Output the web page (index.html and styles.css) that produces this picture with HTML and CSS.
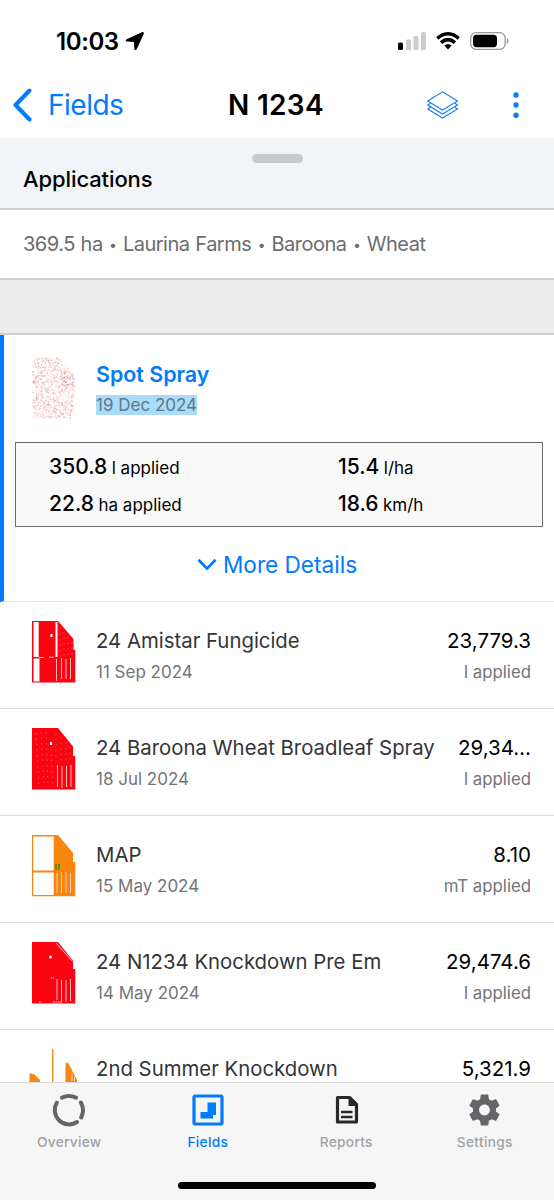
FILE: index.html
```html
<!DOCTYPE html>
<html lang="en">
<head>
<meta charset="utf-8">
<title>N 1234</title>
<link rel="stylesheet" href="styles.css">
</head>
<body>
<div class="screen">
  <header class="top">
    <div class="status">
      <span class="time">10:03</span>
      <svg class="loc" width="20" height="20" viewBox="0 0 20 20"><path d="M16.900 1.200 1.600 8.200c-1.400.7-1.100 2.200.3 2.400l7 .3.4 6.800c.1 1.500 1.800 1.700 2.500.3L18.700 3.100c.6-1.400-.5-2.500-1.800-1.900z"/></svg>
      <span class="grow"></span>
      <svg class="signal" width="28" height="18" viewBox="0 0 28 18"><rect x="0" y="10.500" width="5" height="7.500" rx="1.600"/><g fill="#ccc"><rect x="8" y="7.500" width="5" height="10.500" rx="1.500"/><rect x="15.500" y="4" width="5" height="14" rx="1.500"/><rect x="23" y="0" width="5" height="18" rx="1.500"/></g></svg>
      <svg class="wifi" width="24" height="18" viewBox="0 0 24 18"><g fill="none" stroke="#000" stroke-width="3.500"><path d="M1.300 6.300Q12-2.700 22.700 6.300"/><path d="M5 10.600Q12 4.600 19 10.600"/></g><path d="M8.300 13.600Q12 10.500 15.700 13.600L12 17.500z"/></svg>
      <svg class="battery" width="39" height="18" viewBox="0 0 39 18"><rect x=".7" y=".7" width="34.500" height="16.600" rx="5.500" fill="none" stroke="#999" stroke-width="1.300"/><rect x="3" y="2.800" width="24" height="12.400" rx="3.600"/><path d="M36.800 6c2.200.8 2.200 5.200 0 6z" fill="#999"/></svg>
    </div>
    <nav class="nav">
      <svg width="20" height="34" viewBox="0 0 20 34"><path d="M17.500 2.500 3.500 17 17.500 31.500" fill="none" stroke="#007aff" stroke-width="4" stroke-linecap="round" stroke-linejoin="round"/></svg>
      <a class="back">Fields</a>
      <h1>N 1234</h1>
      <svg class="layers" width="32" height="28" viewBox="0 0 32 28"><g fill="none" stroke="#1880ee" stroke-width="1.100"><path d="M15.500.8 30.500 10 15.500 19 .800 10z"/><path d="M3.300 12.300.8 14l14.700 9 15-9-2.500-1.700M3.300 16.300.8 18l14.700 9 15-9-2.500-1.700"/></g></svg>
      <svg class="more" width="6" height="26" viewBox="0 0 6 26"><g fill="#0a7aff"><circle cx="3" cy="3" r="2.700"/><circle cx="3" cy="13" r="2.700"/><circle cx="3" cy="23.200" r="2.700"/></g></svg>
    </nav>
  </header>
  <section class="sheet-head"><i class="grip"></i><h2>Applications</h2></section>
  <div class="info">369.5 ha <b>•</b> Laurina Farms <b>•</b> Baroona <b>•</b> Wheat</div>
  <div class="spacer"></div>
  <section class="card">
    <div class="card-head">
      <svg class="map" id="speckle" width="46" height="64" viewBox="0 0 46 64"></svg>
      <div><div class="card-title">Spot Spray</div><span class="date hl">19 Dec 2024</span></div>
    </div>
    <div class="stats">
      <div><b>350.8</b> <span>l applied</span></div><div><b>15.4</b> <span>l/ha</span></div>
      <div><b>22.8</b> <span>ha applied</span></div><div><b>18.6</b> <span>km/h</span></div>
    </div>
    <div class="details"><svg width="20" height="13" viewBox="0 0 20 13"><path d="M1.500 1.800 10 10.600 18.500 1.800" fill="none" stroke="#007aff" stroke-width="2.700"/></svg><span>More Details</span></div>
  </section>
  <main class="list">
    <article class="row">
      <svg class="map" width="46" height="64" viewBox="0 0 46 64"><path class="red" d="M1 1H27L42.500 19V30H44.300V62.500H1z"/><path d="M2.500 2h5.200v35H2.500zM24.500 2h2v35h-2zM2.500 38.500h6V61.500h-6zM8 37h5v.8H8zM18 36.800h5v.8h-5z" fill="#fff"/><path d="M19.500 14h2v3h-2z" fill="#fff"/><path class="lines" d="M25.500 39v22M30.500 38v21M35 39v20M39.500 38v21"/><path class="grain" d="M29 8v28M33 12v24M37 17v19M41 22v14"/></svg>
      <div class="text"><div class="name">24 Amistar Fungicide</div><div class="date">11 Sep 2024</div></div>
      <div class="amount"><div class="num">23,779.3</div><div class="unit">l applied</div></div>
    </article>
    <article class="row">
      <svg class="map" width="46" height="64" viewBox="0 0 46 64"><path class="red" d="M1 1H27L42 19.500V29H44.300V62.500H1z"/><path d="M19 15h2v3h-2z" fill="#fff"/><path class="lines" d="M26.500 38v22M31 39v22M35.500 39v21M40 38v22"/><path class="grain" d="M5 6 8 58M10 5 13 58M15 5 17 58M20 22 22 58M25 6v28M30 10v25M35 15v20M39 20v15"/></svg>
      <div class="text"><div class="name">24 Baroona Wheat Broadleaf Spray</div><div class="date">18 Jul 2024</div></div>
      <div class="amount"><div class="num">29,34…</div><div class="unit">l applied</div></div>
    </article>
    <article class="row">
      <svg class="map" width="46" height="64" viewBox="0 0 46 64"><path fill="#f8860e" d="M1 1H27L42 19V28H44.300V62.300H1z"/><path d="M2.200 2.500h20.500v34H2.200zM2.200 38.500h20.500V61H2.200z" fill="#fff"/><path class="lines" d="M26 39v20M30.500 38v21M35 38v21M39.500 39v20"/><path d="M25 30v6M28 30v6" stroke="#71870c" stroke-width="2"/></svg>
      <div class="text"><div class="name">MAP</div><div class="date">15 May 2024</div></div>
      <div class="amount"><div class="num">8.10</div><div class="unit">mT applied</div></div>
    </article>
    <article class="row">
      <svg class="map" width="46" height="64" viewBox="0 0 46 64"><path class="red" d="M1 1H27L42 19.500V28H44.300V62.500H1z"/><path class="lines" d="M25 2 42 21M26 38v21M30.500 39v22M35 39v22M39.500 38v22"/><circle cx="19.500" cy="16" r="1.500" fill="#fff"/><path d="M20 37h3M22 61h9M8 61h3" stroke="#fff" stroke-dasharray="1.500 1"/></svg>
      <div class="text"><div class="name">24 N1234 Knockdown Pre Em</div><div class="date">14 May 2024</div></div>
      <div class="amount"><div class="num">29,474.6</div><div class="unit">l applied</div></div>
    </article>
    <article class="row last">
      <svg class="map" width="50" height="64" viewBox="0 0 50 64"><path fill="#f8860e" d="M.5 25.500 5 26 11 32V64H.5zM23 1H24.300V64H23zM36.500 14.500 39.500 15.500 48 32V64H36.500z"/><path d="M43 26v7M45.500 29v4" stroke="#fff" stroke-width=".7"/></svg>
      <div class="text"><div class="name">2nd Summer Knockdown</div></div>
      <div class="amount"><div class="num">5,321.9</div></div>
    </article>
  </main>
  <footer class="tabs">
    <div class="tab-row">
      <div class="tab"><svg width="34" height="34" viewBox="0 0 34 34"><g fill="none" stroke="#646569" stroke-width="4" stroke-linecap="round"><path d="M10 4.600Q17 1.400 24 4.600M28.900 9.500Q33 17 29.200 24.500M25 29A14.300 14.300 0 0 1 4.800 9.800"/></g></svg><span>Overview</span></div>
      <div class="tab active"><svg width="34" height="34" viewBox="0 0 34 34"><rect x="3" y="3" width="28" height="28" rx="1.500" fill="none" stroke="#007aff" stroke-width="3.200"/><path fill="#007aff" d="M16.500 9.500H25V22H22V25.500H9.500V19H16.500z"/></svg><span>Fields</span></div>
      <div class="tab"><svg width="34" height="34" viewBox="0 0 34 34"><path d="M8.500 4.500h12l7 7v17.500h-19z" fill="none" stroke="#29292b" stroke-width="3.200" stroke-linejoin="round"/><path d="M19.500 4.500v8.500h8z" fill="#29292b"/><path d="M12 19h11.500M12 24h11.500" stroke="#29292b" stroke-width="2.500"/></svg><span>Reports</span></div>
      <div class="tab"><svg width="37" height="37" viewBox="0 0 24 24"><path fill="#646569" d="M19.430 12.980c.04-.32.07-.64.07-.98s-.03-.66-.07-.98l2.110-1.650c.19-.15.24-.42.12-.64l-2-3.460c-.12-.22-.39-.3-.61-.22l-2.490 1c-.52-.4-1.080-.73-1.690-.98l-.38-2.650C14.460 2.180 14.250 2 14 2h-4c-.25 0-.46.18-.49.42l-.38 2.650c-.61.25-1.170.59-1.690.98l-2.490-1c-.23-.09-.49 0-.61.22l-2 3.460c-.13.22-.07.49.12.64l2.110 1.650c-.04.32-.07.65-.07.98s.03.66.07.98l-2.110 1.650c-.19.15-.24.42-.12.64l2 3.460c.12.22.39.3.61.22l2.490-1c.52.4 1.080.73 1.690.98l.38 2.650c.03.24.24.42.49.42h4c.25 0 .46-.18.49-.42l.38-2.650c.61-.25 1.170-.59 1.690-.98l2.490 1c.23.09.49 0 .61-.22l2-3.460c.12-.22.07-.49-.12-.64l-2.110-1.650zM12 15.500c-1.930 0-3.500-1.570-3.500-3.500s1.570-3.500 3.500-3.500 3.500 1.570 3.500 3.500-1.570 3.500-3.500 3.500z"/></svg><span>Settings</span></div>
    </div>
    <i class="home"></i>
  </footer>
</div>
<script src="speckle.js"></script>
</body>
</html>
```
FILE: styles.css
```css
* { box-sizing: border-box; }
body { margin: 0; background: #fff; font-family: Inter, "Liberation Sans", sans-serif; color: #000; }
h1, h2 { margin: 0; }
svg { flex: none; display: block; }
.screen { width: 554px; height: 1200px; overflow: hidden; display: flex; flex-direction: column; }
.top { height: 138px; flex: none; }
.status { height: 70px; padding: 12px 45px 0 56px; display: flex; align-items: center; }
.time { font-size: 24px; font-weight: 600; letter-spacing: -.4px; }
.loc { margin-left: 6px; }
.grow { flex: 1; }
.wifi { margin: 0 10px 0 10px; }
.nav { height: 68px; padding: 1px 35px 0 12px; display: flex; align-items: center; }
.back { width: 180px; margin-left: 16px; font-size: 28px; color: #007aff; letter-spacing: -.5px; }
h1 { width: 198px; font-size: 28px; font-weight: 600; letter-spacing: .3px; white-space: nowrap; }
.layers { margin-left: 1px; }
.more { margin-left: auto; }
.sheet-head { height: 72px; flex: none; background: #f1f5f7; border-bottom: 2px solid #ccced0; display: flex; flex-direction: column; padding: 16px 23px 0; }
.grip { align-self: center; width: 51px; height: 9px; border-radius: 5px; background: #c8cacb; }
h2 { font-size: 22px; line-height: 28px; margin-top: 2px; font-weight: 500; letter-spacing: -.1px; }
.info { height: 70px; flex: none; padding: 0 23px; line-height: 68px; font-size: 20px; color: #6b6c70; border-bottom: 2px solid #cdced0; white-space: nowrap; letter-spacing: -.5px; word-spacing: .7px; }
.info b { font-size: 14px; font-weight: 400; margin: 0 .6px; position: relative; top: -1px; }
.spacer { height: 55px; flex: none; background: #ededee; border-bottom: 2px solid #cecfd2; }
.card { height: 267px; flex: none; border-left: 4px solid #007aff; border-bottom: 1px solid #e1e1e2; padding: 21px 11px 0 11px; }
.card-head { display: flex; gap: 19px; padding-left: 16px; height: 86px; }
.card-title { height: 36px; line-height: 37px; font-size: 21.400px; font-weight: 600; color: #007aff; }
.date { font-size: 17px; line-height: 21px; color: #737477; }
.hl { display: inline-block; height: 20px; line-height: 20px; margin-top: 3px; background: #a9dcfb; color: #5f7886; }
.stats { height: 85px; border: 1px solid #6c6d70; background: #f9f9f9; padding: 6px 0 0 33px; display: grid; grid-template-columns: 289px 1fr; grid-auto-rows: 36.500px; line-height: 35px; white-space: nowrap; }
.stats b { font-size: 21px; font-weight: 500; }
.stats span { font-size: 17px; }
.details { height: 75px; padding-right: 4px; display: flex; align-items: center; justify-content: center; gap: 6px; font-size: 22.600px; color: #007aff; }
.list { flex: 1; min-height: 0; overflow: hidden; }
.row { height: 107px; border-bottom: 1px solid #dedee0; padding: 18px 23px 0 31px; display: flex; }
.text { margin-left: 19px; white-space: nowrap; }
.name { height: 43px; line-height: 42px; font-size: 20.350px; color: #333437; }
.row .date { margin-top: -1px; }
.amount { margin-left: auto; text-align: right; white-space: nowrap; }
.num { height: 43px; line-height: 42px; font-size: 20.500px; }
.unit { margin-top: -1px; line-height: 21px; font-size: 16.800px; color: #737477; }
.last { padding-left: 29px; }
.last .text { margin-left: 17px; }
.red { fill: #fb0411; }
.lines { fill: none; stroke: #ffd0d0; stroke-width: .9; }
.grain { fill: none; stroke: #ff6570; stroke-width: .8; stroke-dasharray: 1.500 4; }
.tabs { height: 118px; flex: none; background: #f6f6f7; border-top: 1px solid #dadadb; display: flex; flex-direction: column; align-items: center; justify-content: space-between; padding-bottom: 11px; }
.tab-row { display: flex; width: 100%; }
.tab { flex: 1; height: 80px; padding-top: 8px; display: flex; flex-direction: column; align-items: center; font-size: 13.700px; font-weight: 500; letter-spacing: .3px; color: #a0a0a2; }
.tab svg { height: 38px; }
.tab span { margin-top: 4px; line-height: 18px; }
.tab.active { color: #007aff; }
.home { width: 198px; height: 7px; border-radius: 4px; background: #000; }
```
FILE: speckle.js
```js
// Scatter of spot-spray hits inside the field boundary.
const svg = document.getElementById('speckle');
let seed = 17;
const rnd = () => (seed = (seed * 16807) % 2147483647) / 2147483647;
for (let i = 0; i < 1100; i++) {
  const x = 1 + rnd() * 42, y = 1 + rnd() * 60.500;
  if (x > 27 && y < (x - 27) * 1.15 + 1) continue;
  const r = document.createElementNS('http://www.w3.org/2000/svg', 'rect');
  r.setAttribute('x', x.toFixed(1));
  r.setAttribute('y', y.toFixed(1));
  r.setAttribute('width', 1.2);
  r.setAttribute('height', 1.2);
  r.setAttribute('fill', '#d8505f');
  const dense = Math.hypot(x - 8, y - 6) < 4 || Math.hypot(x - 2, y - 22) < 5 || Math.hypot(x - 35, y - 25) < 6;
  r.setAttribute('opacity', ((dense ? 0.2 : 0.04) + rnd() * 0.3).toFixed(2));
  svg.appendChild(r);
}
```
